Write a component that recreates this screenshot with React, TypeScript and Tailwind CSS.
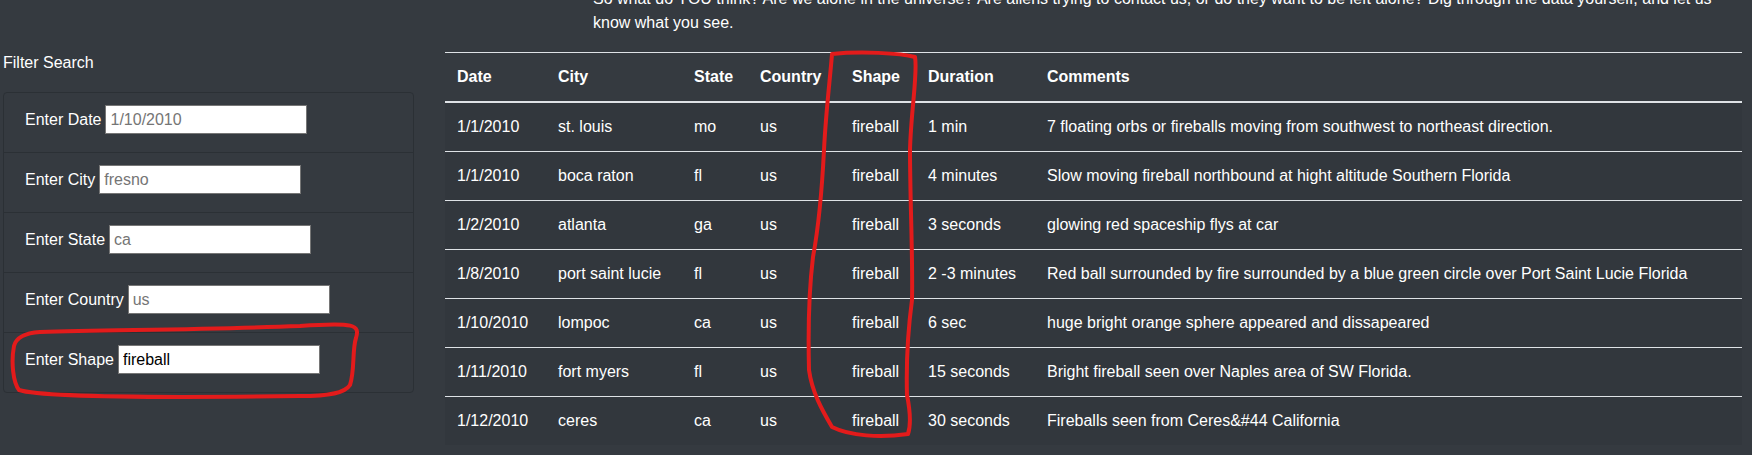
import React from 'react'

const ROWS = [
  ['1/1/2010', 'st. louis', 'mo', 'us', 'fireball', '1 min', '7 floating orbs or fireballs moving from southwest to northeast direction.'],
  ['1/1/2010', 'boca raton', 'fl', 'us', 'fireball', '4 minutes', 'Slow moving fireball northbound at hight altitude Southern Florida'],
  ['1/2/2010', 'atlanta', 'ga', 'us', 'fireball', '3 seconds', 'glowing red spaceship flys at car'],
  ['1/8/2010', 'port saint lucie', 'fl', 'us', 'fireball', '2 -3 minutes', 'Red ball surrounded by fire surrounded by a blue green circle over Port Saint Lucie Florida'],
  ['1/10/2010', 'lompoc', 'ca', 'us', 'fireball', '6 sec', 'huge bright orange sphere appeared and dissapeared'],
  ['1/11/2010', 'fort myers', 'fl', 'us', 'fireball', '15 seconds', 'Bright fireball seen over Naples area of SW Florida.'],
  ['1/12/2010', 'ceres', 'ca', 'us', 'fireball', '30 seconds', 'Fireballs seen from Ceres&#44 California'],
]

const HEADERS = ['Date', 'City', 'State', 'Country', 'Shape', 'Duration', 'Comments']
const COL_WIDTHS = [101, 136, 66, 92, 76, 119, 707]

const FILTERS = [
  { label: 'Enter Date', placeholder: '1/10/2010' },
  { label: 'Enter City', placeholder: 'fresno' },
  { label: 'Enter State', placeholder: 'ca' },
  { label: 'Enter Country', placeholder: 'us' },
  { label: 'Enter Shape', value: 'fireball' },
]

function FilterItem({ label, placeholder, value, first }: { label: string; placeholder?: string; value?: string; first: boolean }) {
  return (
    <li className={`flex items-start pt-[12px] pl-[21px] ${first ? 'h-[59px]' : 'h-[60px] border-t border-[#2b3035]'}`}>
      <div className="flex items-center h-[29px]">
        <label className="mr-[4px] text-white text-[16px] leading-6">{label}</label>
        <input
          className="w-[202px] h-[29px] border border-[#767676] bg-white px-[4px] text-[16px] text-black placeholder:text-[#757575] outline-none"
          placeholder={placeholder}
          defaultValue={value}
          readOnly
        />
      </div>
    </li>
  )
}

export default function App() {
  return (
    <div className="relative w-full h-[455px] overflow-hidden bg-[#353a40] text-white font-['Liberation_Sans',Arial,sans-serif] text-[16px]">
      <div className="flex">
        {/* Left: filters */}
        <aside className="w-[438px] shrink-0 pt-[51px]">
          <div className="pl-[3px] leading-6 mb-[17px]">Filter Search</div>
          <ul className="ml-[3px] w-[411px] border border-[#2b3035] rounded">
            {FILTERS.map((f, i) => (
              <FilterItem key={f.label} {...f} first={i === 0} />
            ))}
          </ul>
        </aside>

        {/* Right: intro + table */}
        <main className="flex-1">
          <p className="ml-[155px] mt-[-13px] mb-[17px] leading-6 whitespace-nowrap">
            So what do YOU think? Are we alone in the universe? Are aliens trying to contact us, or do they want to be left alone? Dig through the data yourself, and let us
            <br />
            know what you see.
          </p>
          <table className="ml-[7px] w-[1297px] table-fixed border-separate border-spacing-0 text-left">
            <colgroup>
              {COL_WIDTHS.map((w, i) => (
                <col key={i} style={{ width: w }} />
              ))}
            </colgroup>
            <thead>
              <tr>
                {HEADERS.map(h => (
                  <th key={h} className="px-3 py-3 leading-6 font-bold border-t border-b-2 border-[#dee2e6]">
                    {h}
                  </th>
                ))}
              </tr>
            </thead>
            <tbody className="bg-[#32373d]">
              {ROWS.map((row, i) => (
                <tr key={i}>
                  {row.map((cell, j) => (
                    <td
                      key={j}
                      className={`px-3 py-3 leading-6 whitespace-nowrap ${i === 0 ? '' : 'border-t border-[#dee2e6]'}`}
                    >
                      {cell}
                    </td>
                  ))}
                </tr>
              ))}
            </tbody>
          </table>
        </main>
      </div>

      {/* Red hand-drawn annotations */}
      <svg className="absolute inset-0 pointer-events-none" width="1752" height="455" viewBox="0 0 1752 455" fill="none">
        <path
          d="M 14 346 C 11 362, 13 382, 19 390 C 40 397, 150 398, 300 396 C 330 396, 345 393, 350 385 C 355 370, 352 350, 356 338 C 360 325, 355 322, 300 326 C 220 329, 120 330, 40 332 C 25 333, 16 338, 14 346 Z"
          stroke="#e31b1b"
          strokeWidth="4"
          strokeLinejoin="round"
        />
        <path
          d="M 832 54 C 860 51, 900 53, 915 57 C 918 72, 911 110, 910 150 C 910 200, 913 260, 912 300 C 908 330, 906 360, 907 395 C 910 410, 911 425, 908 434 C 880 438, 850 436, 832 427 C 822 410, 812 392, 809 370 C 808 330, 809 290, 813 257 C 818 230, 822 190, 824 150 C 826 110, 830 80, 832 54 Z"
          stroke="#e31b1b"
          strokeWidth="4"
          strokeLinejoin="round"
        />
      </svg>
    </div>
  )
}
